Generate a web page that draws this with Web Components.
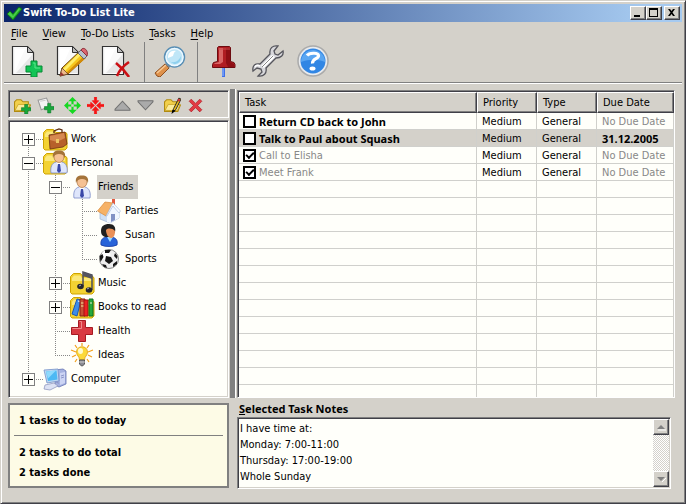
<!DOCTYPE html>
<html lang="en">
<head>
<meta charset="utf-8">
<title>Swift To-Do List Lite</title>
<style>
html, body {
    margin: 0;
    height: 100%;
}
body {
    --face: #d4d1ca;
    --shade: #808080;
    --dark: #404048;
    --paper: #fffffa;
    font: 11px/16px "DejaVu Sans Condensed", "DejaVu Sans", sans-serif;
    color: #000;
    background: var(--face);
}
</style>
</head>
<body>

<todo-window>
    <title-bar slot="title">Swift To-Do List Lite</title-bar>
    <menu-bar slot="menu"></menu-bar>
    <tool-bar slot="tools">
        <tool-button icon="pageadd" label="New task"></tool-button>
        <tool-button icon="pageedit" label="Edit task"></tool-button>
        <tool-button icon="pagedelete" label="Delete task"></tool-button>
        <tool-separator></tool-separator>
        <tool-button icon="search" label="Find"></tool-button>
        <tool-separator></tool-separator>
        <tool-button icon="pin" label="Stay on top"></tool-button>
        <tool-button icon="wrench" label="Options"></tool-button>
        <tool-button icon="help" label="Help"></tool-button>
    </tool-bar>

    <list-panel slot="lists">
        <tool-button small slot="tools" icon="folderadd" label="Add list"></tool-button>
        <tool-button small slot="tools" icon="subadd" label="Add sublist"></tool-button>
        <tool-separator small slot="tools"></tool-separator>
        <tool-button small slot="tools" icon="expand" label="Expand all"></tool-button>
        <tool-button small slot="tools" icon="collapse" label="Collapse all"></tool-button>
        <tool-separator small slot="tools"></tool-separator>
        <tool-button small slot="tools" icon="up" label="Move up"></tool-button>
        <tool-button small slot="tools" icon="down" label="Move down"></tool-button>
        <tool-separator small slot="tools"></tool-separator>
        <tool-button small slot="tools" icon="folderedit" label="Edit list"></tool-button>
        <tool-button small slot="tools" icon="remove" label="Delete list"></tool-button>

        <tree-item first state="plus" icon="work" label="Work"></tree-item>
        <tree-item state="minus" icon="personal" label="Personal">
            <tree-item state="minus" icon="person" label="Friends" selected>
                <tree-item icon="house" label="Parties"></tree-item>
                <tree-item icon="woman" label="Susan"></tree-item>
                <tree-item last icon="ball" label="Sports"></tree-item>
            </tree-item>
            <tree-item state="plus" icon="music" label="Music"></tree-item>
            <tree-item state="plus" icon="books" label="Books to read"></tree-item>
            <tree-item icon="health" label="Health"></tree-item>
            <tree-item last icon="bulb" label="Ideas"></tree-item>
        </tree-item>
        <tree-item last state="plus" icon="computer" label="Computer"></tree-item>
    </list-panel>

    <task-table slot="tasks"></task-table>

    <task-summary slot="summary">
        <span slot="today">1 tasks to do today</span>
        <span slot="total">2 tasks to do total</span>
        <span slot="done">2 tasks done</span>
    </task-summary>

    <task-notes slot="notes">I have time at:
Monday: 7:00-11:00
Thursday: 17:00-19:00
Whole Sunday</task-notes>
</todo-window>

<script>
// shared shapes
const page = `
    <path d="M1.5 1.5h15l6 6v22h-21z" fill="#fafafa" stroke="#333" stroke-width="1.2"/>
    <path d="M4 26V4h10z" fill="#fff"/><path d="M21 10v18H5z" fill="#e6e6e6"/>
    <path d="M16.5 1.5v6h6z" fill="#bbb" stroke="#333"/>`;
const folder = `
    <path d="M.5 5.5l3-3h7l2.500 3h10l1 1.500v14l-2 2h-20l-1.500-1.500z" fill="#f3d233" stroke="#cfa400"/>
    <path d="M2 7l2-2.500h6L12 7h10v3H2z" fill="#fbe87b"/>`;
const person = `
    <path d="M4 23c-1-6 1-10 5-11h6c4 1 6 5 5 11z" fill="#dfe6fb" stroke="#7b8cc8" stroke-width=".8"/>
    <path d="M9 12l3 4 3-4z" fill="#fff"/><path d="M11 14h2l1 7-2 2-2-2z" fill="#3a48a8"/>
    <ellipse cx="12" cy="7" rx="5" ry="5.500" fill="#f5c193" stroke="#a0622c" stroke-width=".6"/>
    <path d="M6 8C5 2 8 .5 12 .5S19 2 18 8c-1-3-3-4-6-4S7 5 6 8z" fill="#a5743a"/>`;
const smallFolder = `
    <path d="M.5 4.500l2-2h4l2 2h5v3l2 0-2.500 6h-12.500z" fill="#f2d04c" stroke="#b08a10"/>
    <path d="M1 12.500l3-5.500h11l-2.500 6z" fill="#fbeb9a" stroke="#c49c1c" stroke-width=".7"/>`;

const icons = {
    check: [16, `<path d="M1 9l3-3 3 3 6-7 3 2-9 11z" fill="#21b02b" stroke="#0c6914" stroke-width=".8"/><path d="M2 9l2-2 3 4 6-8 1 1-7 9z" fill="#4fd04f"/>`],
    min: [14, `<path d="M3 8h6v2H3z"/>`],
    max: [14, `<path d="M2 1h9v9H2zM3 3v6h7V3z" fill-rule="evenodd"/>`],
    close: [14, `<path d="M3 2h2l1.500 2L8 2h2L7.500 5.500 10 9H8L6.500 7 5 9H3l2.500-3.500z"/>`],

    pageadd: [32, page + `<path d="M20 16h6v5h5v6h-5v5h-6v-5h-5v-6h5z" fill="#12c455" stroke="#078a35"/><path d="M22 18h2v5h5" fill="none" stroke="#5ce68c"/>`],
    pageedit: [32, page + `
        <path d="M4 31l2-8L25 5l6 6-19 18z" fill="#f7c71c" stroke="#6a4308"/>
        <path d="M7 24L24 7l2 2L9 26z" fill="#ffee6b"/><path d="M10 28L28 11l2 2-18 16z" fill="#d48c08"/>
        <path d="M4 31l2-8 6 6z" fill="#eeb98b" stroke="#5a3a20" stroke-width=".7"/><path d="M4 31l1-4 3 3z" fill="#933"/>
        <path d="M22 8l3-3 6 6-3 3z" fill="#b9c4cc" stroke="#667"/><path d="M25 5c2-4 8 0 6 6z" fill="#dd6670" stroke="#8c2e38"/>`],
    pagedelete: [32, page + `<path d="M15 18c5 4 9 8 13 14M28 17c-6 4-10 9-12 14" fill="none" stroke="#cc1015" stroke-width="2.600"/>`],
    search: [32, `
        <path d="M1 28l10-9 4 4-9 9-3-1z" fill="#de914b" stroke="#905020"/><path d="M3 28l9-8" stroke="#f7c893" stroke-width="1.500"/>
        <path d="M11 19l3-3 4 4-3 3z" fill="#888"/>
        <circle cx="20.500" cy="12" r="10" fill="#bfe6f7" stroke="#5a8fb5" stroke-width="1.500"/>
        <circle cx="20.500" cy="12" r="8.500" fill="none" stroke="#eef8ff" stroke-width="1.300"/>
        <path d="M14 13c0-5 3-8 8-7-2 1-2 2-3 5z" fill="#fff"/><path d="M15 16c5 3 10 0 12-5 0 6-3 8-7 8z" fill="#8fd0ee"/>`],
    pin: [32, `
        <path d="M16.500 21v11" stroke="#3f6fe8" stroke-width="3"/><path d="M16 21v10" stroke="#9fc3ff"/>
        <path d="M10.500 2.500l1-1h11l1 1v14l3.500 1 1 2v3H5.500v-3l1-2 4-1z" fill="#b01c22" stroke="#6c0c10"/>
        <path d="M12 3h4v14l-3 2H7l1-1 4-1z" fill="#d96464"/><path d="M19 3h4v14l4 2v3h-6l-2-4z" fill="#8e0e14"/>
        <path d="M11 4h12" stroke="#c64a4a"/>`],
    wrench: [32, `
        <path d="M31 6l-5 4-3-1-1-3 4-5c-5-1-9 2-8 8L8 19c-5-1-8 2-7 7l4-3 4 1 1 3-4 4c6 1 9-3 8-8l10-10c5 0 8-3 7-7z" fill="#d7d7db" stroke="#55555c" stroke-width="1.300"/>
        <path d="M20 10L9 21l3 2 11-11z" fill="#fff"/><path d="M21 11L10 22" stroke="#888"/>
        <path d="M3 22c1-2 3-2 5-1" fill="none" stroke="#fff" stroke-width="1.500"/>`],
    help: [32, `
        <circle cx="16" cy="16" r="15" fill="#e8ebef" stroke="#aaa" stroke-width="1.500"/>
        <circle cx="16" cy="16" r="12.500" fill="#3186e4"/><path d="M4 17a12 12 0 0 1 24 0c-7-3-16-3-24 0z" fill="#5aa6f2"/>
        <path d="M10 10.500c2-2.500 11-3.500 11.500 0 .5 3.500-6.500 3-6 8" fill="none" stroke="#fff" stroke-width="3.200"/>
        <ellipse cx="15.500" cy="23.500" rx="3" ry="2" fill="#fff"/>`],

    folderadd: [16, smallFolder + `<path d="M10 7h3v3h3v3h-3v3h-3v-3H7v-3h3z" fill="#18a83c" stroke="#087222" stroke-width=".5"/>`],
    subadd: [16, `<path d="M1 3l8-2 3 8-8 3z" fill="#f4f4f4" stroke="#999"/><path d="M3 4l5-1" stroke="#ccc"/><path d="M10 6h3v3h3v3h-3v3h-3v-3H7V9h3z" fill="#18a83c" stroke="#087222" stroke-width=".5"/>`],
    expand: [16, `<path d="M8 0l4 4H9v3H7V4H4zM8 16l4-4H9V9H7v3H4zM0 8l4-4v3h3v2H4v3zM16 8l-4-4v3H9v2h3v3z" fill="#17d822"/><path d="M7 7h2v2H7z" fill="#d4d1ca"/>`],
    collapse: [16, `<path d="M8 7l3-3.500H9V0H7v3.500H5zM8 9l3 3.500H9V16H7v-3.500H5zM7 8L3.500 5v2H0v2h3.500v2zM9 8l3.500-3v2H16v2h-3.500v2z" fill="#f51515" stroke="#f51515" stroke-width=".7"/>`],
    up: [16, `<path d="M1 12.500v-1L8 4l7 7.500v1z" fill="#aaa" stroke="#707070"/>`],
    down: [16, `<path d="M1 3.500v1L8 12l7-7.500v-1z" fill="#aaa" stroke="#707070"/>`],
    folderedit: [16, smallFolder + `<path d="M8 14l1-3 5-10 2 1-5 10z" fill="#eec020" stroke="#222" stroke-width=".9"/><path d="M13.500 1.500l2 1-1 2-2-1z" fill="#c8303a"/><path d="M7 16l1-4 3 1z"/>`],
    remove: [16, `<path d="M2 4l2-2 4 4 4-4 2 2-4 4 4 4-2 2-4-4-4 4-2-2 4-4z" fill="#e23b44" stroke="#a81820" stroke-width=".6"/>`],

    work: [24, folder + `
        <path d="M11 6V4l5-2 3 1v3" fill="none" stroke="#5c2c10" stroke-width="1.300"/>
        <path d="M6 8l16-3 2 12-4 3L7 22z" fill="#b7602a" stroke="#6d3110" stroke-width=".8"/><path d="M7 9l14-3 1 5-8 4-7-2z" fill="#d68950"/>
        <path d="M13 12h3v4h-3z" fill="#edc664"/>`],
    personal: [24, folder + `<g transform="translate(4 -1)">${person}</g>`],
    person: [24, person],
    house: [24, `
        <path d="M15 0h3v7h-3z" fill="#e25b41"/>
        <path d="M3 12l7-3 12 3v7l-9 5-10-4z" fill="#cfe0f5" stroke="#9db4d4" stroke-width=".7"/>
        <path d="M10 16l6-9 6 6v6l-9 5-3-1z" fill="#f1f7ff"/><path d="M14 15h4v6l-4 2z" fill="#8292c4"/>
        <path d="M.5 12L8 3l8 1-7 13z" fill="#f6b266" stroke="#d98836" stroke-width=".7"/><path d="M16 4l7.500 8-1.500 2-6-7-6 10-1 0z" fill="#fbfdff" stroke="#aabfe0" stroke-width=".7"/>`],
    woman: [24, `
        <path d="M4 22c-1-6 3-8 6-8h5c4 1 6 3 5 8-4 2-12 2-16 0z" fill="#2964d9" stroke="#1439a0" stroke-width=".8"/>
        <path d="M10 14l3 5 3-5z" fill="#9fdcff"/><path d="M4 8c0-5 3-7 8-7s7 3 6 8l-3 5H8c-3-1-4-3-4-6z" fill="#202020"/>
        <path d="M9 7c2-2 6-2 9 1 0 5-2 7-4 7s-5-3-5-8z" fill="#e99058"/>`],
    ball: [24, `
        <circle cx="12" cy="12" r="9.500" fill="#eee" stroke="#777" stroke-width=".9"/><circle cx="9" cy="8" r="4.500" fill="#fff"/>
        <path d="M9 9l5 1 2 4-4 3-4-3zM8 3l6 0-2 3-4 0zM2.500 9l3-2 1 3-3 5zM18 6l2.500 3-.5 3-3-3zM5 17l4 1 1 3-3-1zM16 17l4-3 0 3-4 3z" fill="#161616"/>`],
    music: [24, folder + `
        <path d="M13 15V1l9 3v15" fill="none" stroke="#4c4c58" stroke-width="1.500"/><path d="M13 1l9 3v4l-9-3z" fill="#555560"/>
        <ellipse cx="10.500" cy="15.500" rx="3.300" ry="2.700" fill="#26262e"/><ellipse cx="19" cy="19" rx="3.300" ry="2.700" fill="#26262e"/><path d="M9 15l2-1M17 18l2-1" stroke="#aab"/>`],
    books: [24, folder + `
        <path d="M7 4l4 1-4 16-5-2z" fill="#3d8de8" stroke="#1c58b0"/><path d="M8 6l1.500.5" stroke="#fff"/>
        <path d="M10 4h5v17h-5z" fill="#c85035" stroke="#8a1e12"/><path d="M11 8h3M11 11h3" stroke="#f6e7a0"/>
        <path d="M14 5h4v16h-4z" fill="#ed2222" stroke="#a51010"/><path d="M19 4h4v17h-4z" fill="#26a83c" stroke="#0d7322"/><path d="M20 8h2" stroke="#eec"/>`],
    health: [24, `<path d="M8.500 1.500h7v7h7v7h-7v7h-7v-7h-7v-7h7z" fill="#d93a42" stroke="#a51a22"/><path d="M9.500 2.500h2v7h-9" fill="none" stroke="#f08888"/>`],
    bulb: [24, `
        <path d="M12 0v3M5 2l2 3M19 2l-2 3M1 7l5 2M23 7l-5 2M2 14l4-2M22 14l-4-2M5 19l2-3M19 19l-2-3" stroke="#f3a01a" stroke-width="1.200"/>
        <path d="M6.500 9c0-7 11-7 11 0 0 4-3 4-3 8h-5c0-4-3-4-3-8z" fill="#fcd93a" stroke="#e0a010" stroke-width=".8"/>
        <ellipse cx="10.500" cy="8" rx="2.500" ry="3" fill="#fffbd0"/><path d="M9.500 17h5v4l-2 2h-1l-2-2z" fill="#8c8c94" stroke="#555"/><path d="M9 19h6" stroke="#ccc"/>`],
    computer: [24, `
        <path d="M12 3l8-1 3 2v13l-7 3-4-2z" fill="#a6b2e0" stroke="#6675b4" stroke-width=".8"/><path d="M17 6l5-1v11l-5 2z" fill="#cdd5f4"/>
        <path d="M18 9l3-1M18 11l3-1" stroke="#8a96c8"/>
        <path d="M1 3l14-1 1 12-12 2z" fill="#bcd7f2" stroke="#7591c8" stroke-width=".8"/><path d="M3 4.500l10.500-1 1 9-9.500 1.500z" fill="#4db9f4"/><path d="M3 4.500l10-1-8 8z" fill="#8fdafd"/>
        <path d="M2 18l9-2 4 3-8 4-6-1z" fill="#dde2f4" stroke="#9299c0" stroke-width=".8"/><path d="M12 15l3-1 1 3z" fill="#8c96c8"/>`]
};

function icon(name, size) {
    const [box, shapes] = icons[name];
    return `<svg width="${size || box}" height="${size || box}" viewBox="0 0 ${box} ${box}" aria-hidden="true">${shapes}</svg>`;
}

// little helper so every element gets its shadow root the same way
class Base extends HTMLElement {
    constructor() {
        super();
        this.shadowDom = this.attachShadow({ mode: 'open' });
        this.shadowDom.innerHTML = this.markup();
    }
}

class TodoWindow extends Base {
    markup() {
        return `
        <style>
        :host {
            display: flex;
            flex-direction: column;
            box-sizing: border-box;
            height: 100vh;
            padding: 3px;
            border: 1px solid;
            border-color: var(--face) var(--dark) var(--dark) var(--face);
            box-shadow: inset 1px 1px #fff, inset -1px -1px var(--shade);
            background: var(--face);
        }
        main {
            flex: 1;
            min-height: 0;
            display: grid;
            grid-template-columns: 221px 6px minmax(0, 1fr);
            grid-template-rows: minmax(0, 1fr) auto;
            column-gap: 1px;
            padding: 6px 7px 11px 4px;
        }
        .splitter {
            background: var(--shade);
            border-right: 1px solid #fff;
        }
        .summary {
            padding-top: 5px;
        }
        .notes {
            grid-column: 3;
            padding: 3px 4px 0 0;
        }
        .lists, .tasks {
            display: grid;
            min-height: 0;
            padding-top: 1px;
        }
        </style>
        <slot name="title"></slot>
        <slot name="menu"></slot>
        <slot name="tools"></slot>
        <main>
            <div class="lists"><slot name="lists"></slot></div>
            <div class="splitter"></div>
            <div class="tasks"><slot name="tasks"></slot></div>
            <div class="summary"><slot name="summary"></slot></div>
            <div class="notes"><slot name="notes"></slot></div>
        </main>`;
    }
}

class TitleBar extends Base {
    markup() {
        return `
        <style>
        :host {
            display: flex;
            align-items: center;
            height: 18px;
            padding: 0 2px;
            color: #fff;
            font-weight: bold;
            background: linear-gradient(90deg, #0a246a, #a6caf0 95%);
        }
        .text {
            flex: 1;
            padding-left: 1px;
            line-height: 18px;
        }
        button {
            width: 16px;
            height: 14px;
            padding: 0;
            overflow: hidden;
            border: 1px solid;
            border-color: #fff var(--dark) var(--dark) #fff;
            box-shadow: inset -1px -1px var(--shade);
            background: var(--face);
        }
        button svg {
            display: block;
        }
        button:last-child {
            margin-left: 2px;
        }
        </style>
        ${icon('check')}
        <span class="text"><slot></slot></span>
        <button aria-label="Minimize">${icon('min')}</button>
        <button aria-label="Maximize">${icon('max')}</button>
        <button aria-label="Close">${icon('close')}</button>`;
    }
}

class MenuBar extends Base {
    markup() {
        return `
        <style>
        :host {
            display: flex;
            height: 18px;
            padding-top: 2px;
        }
        button {
            font: inherit;
            line-height: 20px;
            padding: 0 8px 0 7px;
            border: 0;
            background: none;
        }
        u {
            text-underline-offset: 2px;
        }
        </style>
        <button><u>F</u>ile</button>
        <button><u>V</u>iew</button>
        <button><u>T</u>o-Do Lists</button>
        <button><u>T</u>asks</button>
        <button><u>H</u>elp</button>`;
    }
}

class ToolBar extends Base {
    markup() {
        return `
        <style>
        :host {
            display: flex;
            height: 40px;
            padding-left: 1px;
            border-bottom: 1px solid var(--shade);
            box-shadow: 0 1px #fff;
        }
        </style>
        <slot></slot>`;
    }
}

class ToolButton extends Base {
    markup() {
        const small = this.hasAttribute('small');
        return `
        <style>
        :host {
            display: block;
        }
        button {
            display: flex;
            align-items: center;
            width: 45px;
            height: 100%;
            padding: 0 0 2px 6px;
            border: 0;
            background: none;
        }
        button.small {
            width: 23px;
            padding: 2px 0 0 3px;
        }
        </style>
        <button class="${small ? 'small' : ''}" aria-label="${this.getAttribute('label')}">${icon(this.getAttribute('icon'), small ? 17 : 32)}</button>`;
    }
}

class ToolSeparator extends Base {
    markup() {
        return `
        <style>
        :host {
            display: block;
            width: 1px;
            margin: 0 3px 0 4px;
            background: var(--shade);
        }
        :host([small]) {
            width: 4px;
            margin: 0;
            background: none;
        }
        </style>`;
    }
}

class ListPanel extends Base {
    markup() {
        return `
        <style>
        :host {
            display: flex;
            flex-direction: column;
            gap: 2px;
            min-height: 0;
        }
        .tools, .tree {
            border: 1px solid;
            border-color: var(--shade) #fff #fff var(--shade);
            box-shadow: inset 1px 1px var(--dark), inset -1px -1px var(--face);
        }
        .tools {
            display: flex;
            height: 26px;
            padding-left: 2px;
        }
        .tree {
            flex: 1;
            min-height: 0;
            overflow: hidden;
            padding: 6px 0 0 13px;
            background: var(--paper);
        }
        </style>
        <div class="tools"><slot name="tools"></slot></div>
        <div class="tree"><slot></slot></div>`;
    }
}

// one row of the tree; child rows go in the slot
class TreeItem extends Base {
    markup() {
        const state = this.getAttribute('state');
        return `
        <style>
        :host {
            display: block;
            background: repeating-linear-gradient(#888 0 1px, transparent 1px 2px) 6px 0 / 1px 100% no-repeat;
        }
        :host([first]) {
            background-position: 6px 12px;
        }
        :host([last]) {
            background-size: 1px 12px;
        }
        .row {
            display: flex;
            align-items: center;
            height: 24px;
            background: repeating-linear-gradient(90deg, #888 0 1px, transparent 1px 2px) 6px 12px / 15px 1px no-repeat;
        }
        .box {
            box-sizing: border-box;
            width: 13px;
            height: 13px;
            margin-right: 8px;
        }
        .plus, .minus {
            border: 1px solid var(--shade);
            background: linear-gradient(#000, #000) 1px 5px / 9px 1px no-repeat, var(--paper);
        }
        .plus {
            background: linear-gradient(#000, #000) 1px 5px / 9px 1px no-repeat,
                linear-gradient(#000, #000) 5px 1px / 1px 9px no-repeat, var(--paper);
        }
        svg {
            overflow: visible;
        }
        .label {
            line-height: 24px;
            margin-left: 3px;
            padding: 0 4px 0 1px;
        }
        :host([selected]) .label {
            background: var(--face);
        }
        .children {
            padding-left: 27px;
        }
        </style>
        <div class="row">
            <span class="box ${state || ''}"></span>
            ${icon(this.getAttribute('icon'))}
            <span class="label">${this.getAttribute('label')}</span>
        </div>
        <div class="children"><slot></slot></div>`;
    }
}

const tasks = [
    { name: 'Return CD back to John', due: 'No Due Date' },
    { name: 'Talk to Paul about Squash', due: '31.12.2005', selected: true },
    { name: 'Call to Elisha', due: 'No Due Date', done: true },
    { name: 'Meet Frank', due: 'No Due Date', done: true }
];

class TaskTable extends Base {
    markup() {
        const rows = tasks.map(t => `
            <tr class="${t.selected ? 'selected' : ''} ${t.done ? 'done' : ''}">
                <td><label><input type="checkbox" ${t.done ? 'checked' : ''}><span>${t.name}</span></label></td>
                <td>Medium</td>
                <td>General</td>
                <td class="${t.due === 'No Due Date' ? 'none' : 'due'}">${t.due}</td>
            </tr>`).join('');
        const blank = '<tr><td></td><td></td><td></td><td></td></tr>'.repeat(13);
        return `
        <style>
        :host {
            display: block;
            overflow: hidden;
            min-height: 0;
            border: 1px solid;
            border-color: var(--shade) #fff #fff var(--shade);
            padding: 1px 0 0 1px;
            box-shadow: inset 1px 1px var(--dark);
            background: var(--paper);
        }
        table {
            width: 100%;
            table-layout: fixed;
            border-collapse: separate;
            border-spacing: 0;
        }
        th, td {
            box-sizing: border-box;
            padding: 0 0 0 5px;
            text-align: left;
            white-space: nowrap;
        }
        th {
            height: 21px;
            font-weight: normal;
            border: 1px solid;
            border-color: #fff var(--dark) var(--dark) #fff;
            box-shadow: inset -1px -1px var(--shade);
            background: var(--face);
        }
        td {
            height: 17px;
            line-height: 14px;
            padding-top: 2px;
            border: solid #d0d0cc;
            border-width: 0 1px 1px 0;
        }
        td:first-child {
            padding: 0 0 0 4px;
        }
        th:nth-child(2), th:nth-child(3) {
            width: 60px;
        }
        th:last-child {
            width: 77px;
        }
        label {
            display: flex;
            align-items: center;
            gap: 3px;
            font: bold 11px/14px "Noto Sans", sans-serif;
        }
        span {
            padding-top: 2px;
        }
        input {
            appearance: none;
            width: 13px;
            height: 13px;
            margin: 0;
            border: 2px solid #000;
            background: #fff;
        }
        input:checked::before {
            content: "";
            display: block;
            width: 8px;
            height: 5px;
            margin: 1px 0 0 1px;
            border: solid #000;
            border-width: 0 0 2px 2px;
            box-sizing: border-box;
            transform: rotate(-45deg);
        }
        .selected td {
            background: var(--face);
        }
        .done label {
            font: inherit;
        }
        .done span, .none {
            color: #888;
        }
        .due {
            font: bold 11px/14px "Noto Sans", sans-serif;
        }
        </style>
        <table>
            <thead><tr><th>Task</th><th>Priority</th><th>Type</th><th>Due Date</th></tr></thead>
            <tbody>${rows}${blank}</tbody>
        </table>`;
    }
}

class TaskSummary extends Base {
    markup() {
        return `
        <style>
        :host {
            display: flex;
            flex-direction: column;
            padding: 6px 4px 3px;
            border: 2px solid var(--shade);
            background: #fdfbe6;
            font-weight: bold;
            line-height: 20px;
        }
        div {
            padding-left: 5px;
        }
        hr {
            width: 100%;
            margin: 4px 0 7px;
            border: 0;
            border-top: 1px solid var(--shade);
        }
        </style>
        <div><slot name="today"></slot></div>
        <hr>
        <div><slot name="total"></slot></div>
        <div><slot name="done"></slot></div>`;
    }
}

class TaskNotes extends Base {
    markup() {
        return `
        <style>
        :host {
            display: block;
        }
        label {
            display: block;
            padding-left: 2px;
            font: bold 11px/16px "Noto Sans", sans-serif;
        }
        .box {
            display: flex;
            height: 68px;
            border: 1px solid;
            border-color: var(--shade) #fff #fff var(--shade);
            padding: 1px;
            box-shadow: inset 1px 1px var(--dark), inset -1px -1px var(--face);
            background: var(--paper);
        }
        textarea {
            flex: 1;
            min-width: 0;
            padding: 2px 0 0 1px;
            border: 0;
            resize: none;
            outline: none;
            overflow: hidden;
            font: inherit;
            color: inherit;
            background: none;
        }
        .scroll {
            display: flex;
            flex-direction: column;
            justify-content: space-between;
            width: 16px;
            background: repeating-conic-gradient(#fff 0 25%, #d4d1ca 0 50%) 0 0 / 2px 2px;
        }
        button {
            height: 16px;
            padding: 0;
            border: 1px solid;
            border-color: #fff var(--dark) var(--dark) #fff;
            box-shadow: inset -1px -1px var(--shade);
            background: var(--face);
        }
        button svg {
            display: block;
        }
        </style>
        <label for="notes"><u>S</u>elected Task Notes</label>
        <div class="box">
            <textarea id="notes">${this.textContent}</textarea>
            <div class="scroll">
                <button aria-label="Scroll up"><svg width="14" height="14"><path d="M4 10h8" stroke="#fff"/><path d="M3 9l4-4 4 4z" fill="#808080"/></svg></button>
                <button aria-label="Scroll down"><svg width="14" height="14"><path d="M8 10l4-4" stroke="#fff"/><path d="M3 5l4 4 4-4z" fill="#808080"/></svg></button>
            </div>
        </div>`;
    }
}

customElements.define('todo-window', TodoWindow);
customElements.define('title-bar', TitleBar);
customElements.define('menu-bar', MenuBar);
customElements.define('tool-bar', ToolBar);
customElements.define('tool-button', ToolButton);
customElements.define('tool-separator', ToolSeparator);
customElements.define('list-panel', ListPanel);
customElements.define('tree-item', TreeItem);
customElements.define('task-table', TaskTable);
customElements.define('task-summary', TaskSummary);
customElements.define('task-notes', TaskNotes);
</script>
</body>
</html>
